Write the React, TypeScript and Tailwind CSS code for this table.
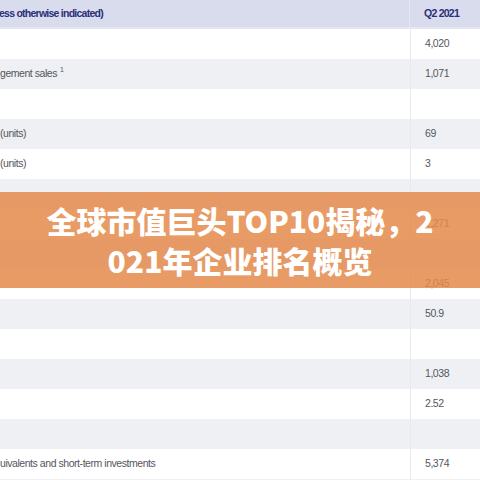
const rows: { label?: string; sup?: string; value?: string }[] = [
  { value: '4,020' },
  { label: 'gement sales', sup: '1', value: '1,071' },
  {},
  { label: '(units)', value: '69' },
  { label: '(units)', value: '3' },
  {},
  { value: '2,271' },
  {},
  { value: '2,045' },
  { value: '50.9' },
  {},
  { value: '1,038' },
  { value: '2.52' },
  {},
  { label: 'uivalents and short-term investments', value: '5,374' },
  {},
]

export default function App() {
  return (
    <div
      className="relative w-[480px] h-[480px] overflow-hidden bg-white"
      style={{ fontFamily: '"Liberation Sans", Arial, sans-serif' }}
    >
      {/* Table header */}
      <div className="flex h-[29px] bg-[#d9dcec] border-b-2 border-[#e4e6f2] text-[#2a2f78] font-bold text-[10.5px] tracking-[-0.75px]">
        <div className="w-[411px] flex items-center border-r border-[#e6e8f1] -ml-[1px]">
          ess otherwise indicated)
        </div>
        <div className="flex-1 flex items-center pl-[14px]">Q2 2021</div>
      </div>

      {/* Table rows */}
      {rows.map((r, i) => (
        <div
          key={i}
          className={`flex h-[30px] text-[#55565e] text-[10.5px] tracking-[-0.45px] ${
            i % 2 === 1 ? 'bg-[#eef0f3]' : 'bg-white'
          }`}
        >
          <div className="w-[411px] flex items-center border-r border-[#e7e9ee]">
            {r.label}
            {r.sup && <sup className="ml-[3px] text-[7px] -top-[4px]">{r.sup}</sup>}
          </div>
          <div className="flex-1 flex items-center pl-[14px]">{r.value}</div>
        </div>
      ))}

      {/* Title banner */}
      <div className="absolute left-0 right-0 top-[192px] h-[96px] bg-[#e4894a]/85 flex items-center justify-center">
        <h1
          className="w-[392px] text-center text-white font-black text-[30px] leading-[40px] break-all"
          style={{ fontFamily: '"Noto Sans CJK SC", "Noto Sans", sans-serif' }}
        >
          全球市值巨头TOP10揭秘，2021年企业排名概览
        </h1>
      </div>
    </div>
  )
}
